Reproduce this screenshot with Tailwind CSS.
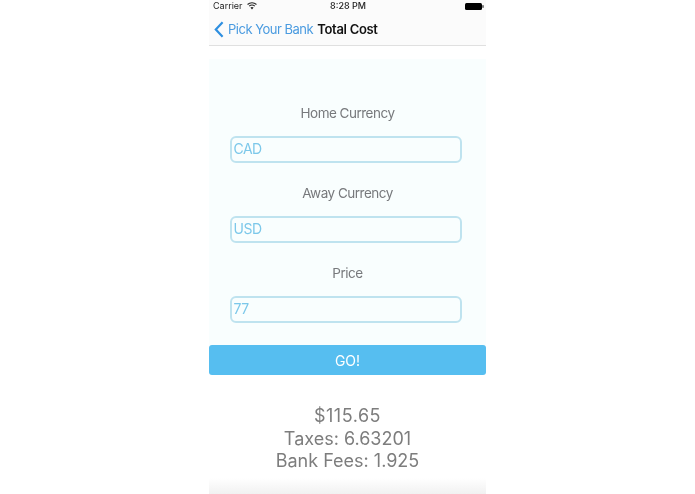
<!DOCTYPE html>
<html lang="en">
<head>
    <meta charset="UTF-8">
    <title>Total Cost</title>
    <script src="https://cdn.jsdelivr.net/npm/@tailwindcss/browser@4"></script>
</head>
<body class="bg-white h-[494px] overflow-hidden font-['Inter',sans-serif]">
    <div class="w-[277px] h-[494px] ml-[209px] flex flex-col blur-[0.3px]">
        <header class="h-[46px] bg-[#fbfbfb] border-b border-[#e0e0e0] shrink-0">
            <div class="h-[12px] relative flex items-center px-[4px] text-[9px] text-[#222]">
                <span>Carrier</span>
                <svg class="ml-[4px]" width="10" height="8" viewBox="0 0 10 8"><path d="M5 7.5 3.4 5.6a2.4 2.4 0 0 1 3.2 0zM2.5 4.6a3.8 3.8 0 0 1 5 0l.7-.8a5 5 0 0 0-6.4 0zM.9 2.9a6.2 6.2 0 0 1 8.2 0l.7-.8a7.4 7.4 0 0 0-9.6 0z" fill="#222"/></svg>
                <span class="absolute left-[121px] whitespace-nowrap font-medium">8:28 PM</span>
                <svg class="absolute left-[256px]" width="19" height="7" viewBox="0 0 19 7"><rect width="17" height="7" rx="1.5" fill="#000"/><rect x="17.5" y="2.2" width="1" height="2.6" fill="#000"/></svg>
            </div>
            <div class="h-[33px] flex items-center pl-[5px] pt-[2px]">
                <svg width="10" height="17" viewBox="0 0 10 17" fill="none"><path d="M8.6 1.2 1.8 8.5l6.8 7.3" stroke="#2e8fe0" stroke-width="2.2"/></svg>
                <span class="ml-[4px] text-[13px] text-[#4a9be0] tracking-[-0.5px]">Pick Your Bank</span>
                <span class="ml-[4px] text-[13px] font-semibold text-[#111] tracking-[-0.3px]">Total Cost</span>
            </div>
        </header>
        <form class="mt-[13px] h-[286px] bg-[#f9fefe] flex flex-col items-center pt-[45px] shrink-0">
            <label class="h-[18px] leading-[18px] text-[13.5px] tracking-[-0.5px] text-[#77797c]">Home Currency</label>
            <div class="mt-[14px] w-[232px] h-[27px] -translate-x-[2px] border-2 border-[#bfe3ef] rounded-[6px] pl-[2px] leading-[22px] text-[14px] tracking-[-0.5px] text-[#7cc8ea]">CAD</div>
            <label class="mt-[21px] h-[18px] leading-[18px] text-[13.5px] tracking-[-0.5px] text-[#77797c]">Away Currency</label>
            <div class="mt-[14px] w-[232px] h-[27px] -translate-x-[2px] border-2 border-[#bfe3ef] rounded-[6px] pl-[2px] leading-[22px] text-[14px] tracking-[-0.5px] text-[#7cc8ea]">USD</div>
            <label class="mt-[21px] h-[18px] leading-[18px] text-[13.5px] tracking-[-0.5px] text-[#77797c]">Price</label>
            <div class="mt-[14px] w-[232px] h-[27px] -translate-x-[2px] border-2 border-[#bfe3ef] rounded-[6px] pl-[2px] leading-[22px] text-[14px] tracking-[-0.5px] text-[#7cc8ea]">77</div>
        </form>
        <button class="h-[30px] bg-[#56bef0] rounded-[3px] text-[14px] text-white shrink-0">GO!</button>
        <div class="mt-[30px] flex flex-col items-center text-[18px] leading-[22.5px] text-[#7d7d7d]">
            <p class="tracking-[0.5px]">$115.65</p>
            <p>Taxes: 6.63201</p>
            <p>Bank Fees: 1.925</p>
        </div>
        <div class="mt-auto h-[16px] bg-gradient-to-b from-white to-[#f1f1f1]"></div>
    </div>
</body>
</html>
